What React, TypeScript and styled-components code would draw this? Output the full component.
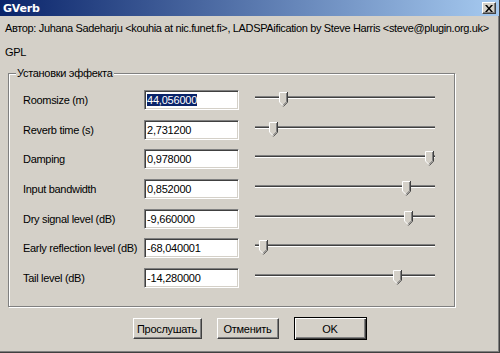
import React from "react";
import styled, { createGlobalStyle } from "styled-components";

const Global = createGlobalStyle`
  html, body { margin: 0; padding: 0; background: #d4d0c8; }
  body { font-family: "Liberation Sans", Arial, sans-serif; font-size: 11px; color: #000; }
`;

const Window = styled.div`
  width: 500px;
  height: 353px;
  box-sizing: border-box;
  background: #d4d0c8;
  border-right: 1px solid #404040;
  border-bottom: 1px solid #404040;
  box-shadow: inset -1px -1px 0 #808080;
  display: flex;
  flex-direction: column;
  overflow: hidden;
`;

const TitleBar = styled.div`
  height: 16px;
  flex: none;
  background: linear-gradient(to right, #0a246a, #a6caf0);
  display: flex;
  align-items: center;
  justify-content: space-between;
  padding: 0 3px 0 3px;
`;

const Title = styled.span`
  color: #fff;
  font-weight: bold;
  font-size: 11px;
  font-family: "DejaVu Sans", "Liberation Sans", sans-serif;
  letter-spacing: -0.2px;
`;

const CloseBtn = styled.div`
  width: 14px;
  height: 12px;
  box-sizing: border-box;
  background: #d4d0c8;
  border: 1px solid;
  border-color: #fff #404040 #404040 #fff;
  box-shadow: inset -1px -1px 0 #808080;
  display: flex;
  align-items: center;
  justify-content: center;
`;

const Content = styled.div`
  display: flex;
  flex-direction: column;
  padding: 0 5px;
`;

const InfoLine = styled.div<{ $top: number }>`
  margin-top: ${(p) => p.$top}px;
  line-height: 14px;
  height: 14px;
  white-space: nowrap;
  letter-spacing: -0.35px;
`;

const GroupBox = styled.div`
  position: relative;
  margin: 14px 0 0 3px;
  width: 447px;
  box-sizing: border-box;
  border: 1px solid #808080;
  box-shadow: inset 1px 1px 0 #fff, 1px 1px 0 #fff;
  padding: 16px 0 18px 14px;
`;

const Legend = styled.span`
  position: absolute;
  top: -8px;
  left: 7px;
  padding: 0 1px;
  background: #d4d0c8;
  line-height: 14px;
  letter-spacing: -0.3px;
`;

const Grid = styled.div`
  display: grid;
  grid-template-columns: 121px 95px 196px;
  row-gap: 9.7px;
  align-items: center;
`;

const Label = styled.div`
  height: 20px;
  line-height: 20px;
  white-space: nowrap;
  letter-spacing: -0.3px;
`;

const Field = styled.div`
  height: 20px;
  box-sizing: border-box;
  background: #fff;
  border: 1px solid;
  border-color: #808080 #fff #fff #808080;
  box-shadow: inset 1px 1px 0 #404040, inset -1px -1px 0 #d4d0c8;
  padding: 0 2px;
  line-height: 18px;
  letter-spacing: -0.2px;
`;

const Selected = styled.span<{ $on: boolean }>`
  background: ${(p) => (p.$on ? "#0a246a" : "transparent")};
  color: ${(p) => (p.$on ? "#fff" : "#000")};
`;

const SliderWrap = styled.div`
  position: relative;
  height: 20px;
  margin-left: 16px;
`;

const Track = styled.div`
  position: absolute;
  left: 0;
  right: 0;
  top: 6px;
  height: 3px;
  box-sizing: border-box;
  border-top: 1px solid #808080;
  border-bottom: 1px solid #fff;
  background: #404040;
`;

const Thumb = styled.svg`
  position: absolute;
  top: 2px;
  width: 9px;
  height: 15px;
  margin-left: -4px;
`;

const Buttons = styled.div`
  display: flex;
  justify-content: center;
  gap: 15px;
  margin-top: 11px;
`;

const Button = styled.div<{ $w: number; $default?: boolean }>`
  width: ${(p) => p.$w}px;
  height: ${(p) => (p.$default ? 23 : 21)}px;
  box-sizing: border-box;
  background: #d4d0c8;
  border: 1px solid;
  border-color: ${(p) => (p.$default ? "#000" : "#fff #404040 #404040 #fff")};
  box-shadow: ${(p) =>
    p.$default
      ? "inset 1px 1px 0 #fff, inset -1px -1px 0 #404040, inset -2px -2px 0 #808080"
      : "inset -1px -1px 0 #808080"};
  display: flex;
  align-items: center;
  justify-content: center;
  letter-spacing: -0.3px;
  margin-top: ${(p) => (p.$default ? -1 : 0)}px;
`;

const rows = [
  { label: "Roomsize (m)", value: "44,056000", pos: 283 },
  { label: "Reverb time (s)", value: "2,731200", pos: 273 },
  { label: "Damping", value: "0,978000", pos: 429 },
  { label: "Input bandwidth", value: "0,852000", pos: 406 },
  { label: "Dry signal level (dB)", value: "-9,660000", pos: 408 },
  { label: "Early reflection level (dB)", value: "-68,040001", pos: 263 },
  { label: "Tail level (dB)", value: "-14,280000", pos: 397 },
];

const ThumbIcon = ({ left }: { left: number }) => (
  <Thumb viewBox="0 0 9 15" style={{ left }}>
    <polygon points="0,0 8,0 8,10 4,14 0,10" fill="#d4d0c8" />
    <polyline points="0.5,10 0.5,0.5 8,0.5" fill="none" stroke="#fff" strokeWidth="1" />
    <polyline points="8.5,0 8.5,10.2 4.3,14.5" fill="none" stroke="#404040" strokeWidth="1" />
    <polyline points="7.5,1 7.5,9.8 4,13.3" fill="none" stroke="#808080" strokeWidth="1" />
    <line x1="0.5" y1="10" x2="4" y2="13.5" stroke="#fff" strokeWidth="1" />
  </Thumb>
);

export default function App() {
  return (
    <>
      <Global />
      <Window>
        <TitleBar>
          <Title>GVerb</Title>
          <CloseBtn>
            <svg width="8" height="7" viewBox="0 0 8 7">
              <path d="M0 0h2l2 2.5L6 0h2L5 3.5 8 7H6L4 4.5 2 7H0l3-3.5z" fill="#000" />
            </svg>
          </CloseBtn>
        </TitleBar>
        <Content>
          <InfoLine $top={5}>
            Автор: Juhana Sadeharju &lt;kouhia at nic.funet.fi&gt;, LADSPAification by Steve Harris &lt;steve@plugin.org.uk&gt;
          </InfoLine>
          <InfoLine $top={10}>GPL</InfoLine>
          <GroupBox>
            <Legend>Установки эффекта</Legend>
            <Grid>
              {rows.map((r, i) => (
                <React.Fragment key={r.label}>
                  <Label>{r.label}</Label>
                  <Field>
                    <Selected $on={i === 0}>{r.value}</Selected>
                  </Field>
                  <SliderWrap>
                    <Track />
                    <ThumbIcon left={r.pos - 255} />
                  </SliderWrap>
                </React.Fragment>
              ))}
            </Grid>
          </GroupBox>
          <Buttons>
            <Button $w={69}>Прослушать</Button>
            <Button $w={62}>Отменить</Button>
            <Button $w={73} $default>OK</Button>
          </Buttons>
        </Content>
      </Window>
    </>
  );
}
